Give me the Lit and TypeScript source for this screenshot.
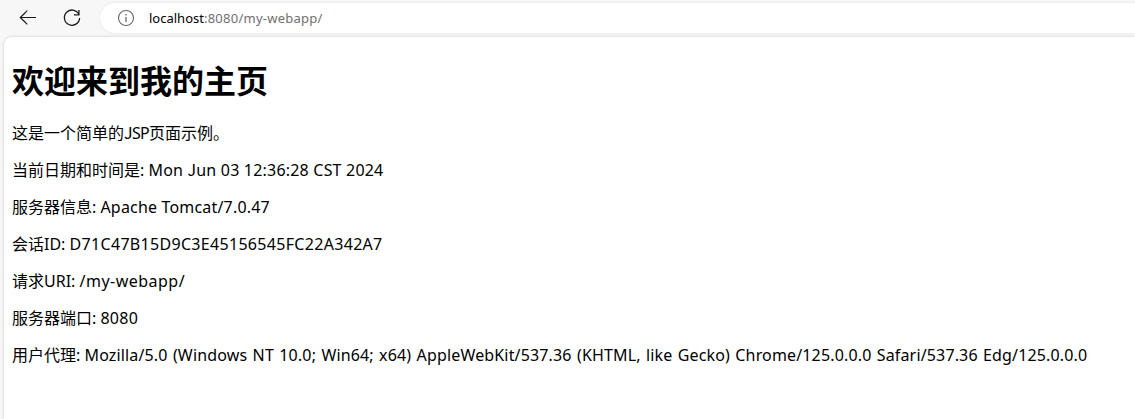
import { LitElement, html, css } from "lit";
import { customElement } from "lit/decorators.js";

@customElement("browser-toolbar")
class BrowserToolbar extends LitElement {
  static styles = css`
    :host {
      display: flex;
      align-items: flex-start;
      height: 36px;
      padding-left: 18px;
      box-sizing: border-box;
    }
    svg { display: block; flex: none; fill: none; stroke: #1b1b1b; }
    .back { margin-top: 8px; }
    .reload { margin: 8px 0 0 24px; }
    .address {
      flex: 1;
      display: flex;
      align-items: center;
      height: 30px;
      margin: 3px 0 0 18px;
      padding-left: 16px;
      border-radius: 15px 0 0 15px;
      background: #fff;
      box-shadow: 0 0 3px rgba(0, 0, 0, 0.09);
      font: 13px/18px "Noto Sans", "Noto Sans CJK SC", sans-serif;
      color: #707070;
      white-space: nowrap;
    }
    .info { stroke: #666; }
    .url { margin-left: 13px; letter-spacing: 0.25px; }
    .host { color: #000; letter-spacing: 0; }
  `;

  render() {
    return html`
      <svg class="back" width="20" height="20" viewBox="0 0 20 20" stroke-width="1.2">
        <path d="M18 9.5H2.5M7.7 4.2L2.3 9.5L7.7 14.8M7.7 4.2L9.3 2.6M7.7 14.8L9.3 16.4" />
      </svg>
      <svg class="reload" width="20" height="20" viewBox="0 0 20 20" stroke-width="1.3">
        <path d="M17.2 7.2A7.6 7.6 0 1 0 17.6 10M16.9 2V6.9H12" />
      </svg>
      <div class="address">
        <svg class="info" width="20" height="20" viewBox="0 0 20 20" stroke-width="1.1">
          <circle cx="10" cy="10" r="7.5" />
          <path d="M10 9V14M10 6V7.5" stroke-width="1.3" />
        </svg>
        <span class="url"><span class="host">localhost</span>:8080/my-webapp/</span>
      </div>
    `;
  }
}

@customElement("app-root")
class AppRoot extends LitElement {
  static styles = css`
    :host {
      display: flex;
      flex-direction: column;
      height: 419px;
      overflow: hidden;
      background: #f7f7f7;
    }
    .page {
      flex: 1;
      margin: 1px 0 0 4px;
      padding: 0 8px;
      border-radius: 8px 0 0 0;
      background: #fff;
      box-shadow: 0 0 3px rgba(0, 0, 0, 0.2);
      color: #000;
      font: 16px/21px "Noto Sans", "Noto Sans CJK SC", sans-serif;
      white-space: nowrap;
    }
    h1 {
      margin: 21px 0 22px;
      font: bold 32px/43px "Noto Sans CJK SC", sans-serif;
    }
    p { height: 21px; margin: 0 0 16px; }
    .cap { font-family: "Noto Sans CJK SC", sans-serif; line-height: 1; }
    .jsp { letter-spacing: -0.65px; }
    .date { letter-spacing: 0.2px; }
    .server { letter-spacing: 0.18px; }
    .session { letter-spacing: 0.31px; }
    .uri { letter-spacing: 0.48px; }
    .port { letter-spacing: 0.25px; }
    .agent { letter-spacing: 0.153px; word-spacing: 1px; }
  `;

  private rows = [
    ["服务器信息:", "server", "Apache Tomcat/7.0.47"],
    ["会话ID:", "session", "D71C47B15D9C3E45156545FC22A342A7"],
    ["请求URI:", "uri", "/my-webapp/"],
    ["服务器端口:", "port", "8080"],
    ["用户代理:", "agent", "Mozilla/5.0 (Windows NT 10.0; Win64; x64) AppleWebKit/537.36 (KHTML, like Gecko) Chrome/125.0.0.0 Safari/537.36 Edg/125.0.0.0"],
  ];

  render() {
    return html`
      <browser-toolbar></browser-toolbar>
      <main class="page">
        <h1>欢迎来到我的主页</h1>
        <p>这是一个简单的<span class="jsp"><span class="cap">J</span>SP</span>页面示例。</p>
        <p>当前日期和时间是: <span class="date">Mon <span class="cap">J</span>un 03 12:36:28 CST 2024</span></p>
        ${this.rows.map(([label, kind, value]) => html`<p>${label} <span class=${kind}>${value}</span></p>`)}
      </main>
    `;
  }
}
